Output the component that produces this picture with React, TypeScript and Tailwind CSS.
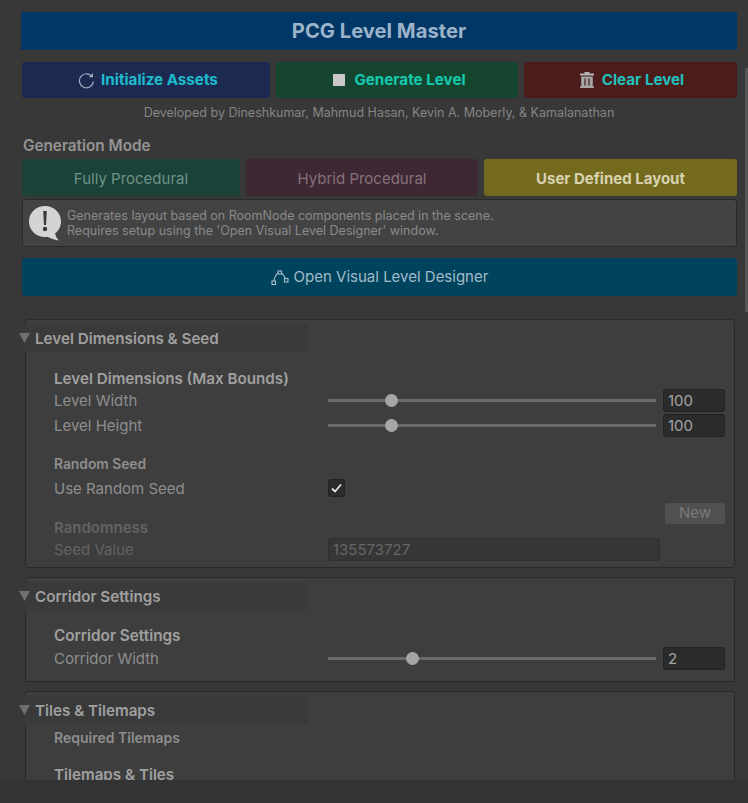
import React from "react";

const Slider = ({ pos }: { pos: number }) => (
  <div className="relative flex h-[13px] w-[328px] items-center">
    <div className="h-[3px] w-full bg-[#6a6a6a]" />
    <div
      className="absolute top-0 h-[13px] w-[13px] rounded-full bg-[#a6a6a6]"
      style={{ left: pos }}
    />
  </div>
);

const NumField = ({ value }: { value: string }) => (
  <div className="flex h-[23px] w-[62px] items-center rounded-[3px] border border-[#222222] bg-[#2b2b2b] pt-[1px] pl-1 text-[15px] text-[#a4a4a4]">
    {value}
  </div>
);

const SliderRow = ({ label, pos, value }: { label: string; pos: number; value: string }) => (
  <div className="flex h-[25px] items-center">
    <div className="w-[274px] pt-[2px] text-[15px] text-[#8e8e8e]">{label}</div>
    <Slider pos={pos} />
    <div className="ml-[7px]">
      <NumField value={value} />
    </div>
  </div>
);

const Panel = ({ title, className, children }: { title: string; className: string; children: React.ReactNode }) => (
  <section className={`relative mr-[13px] ml-[25px] rounded-[3px] border border-[#2a2a2a] bg-[#3e3e3e] ${className}`}>
    <div className="-ml-px mt-[4px] flex h-[28px] w-[283px] items-center bg-[#3a3a3a] pt-[2px] pl-[10px] text-[15.2px] font-semibold text-[#a0a0a0]">
      {title}
    </div>
    <svg className="absolute top-[13px] left-[-7px]" width="11" height="10" viewBox="0 0 11 10">
      <path d="M0 0H11L5.5 10Z" fill="#707070" />
    </svg>
    <div className="pl-[28px]">{children}</div>
  </section>
);

const TrashIcon = () => (
  <svg width="16" height="16" viewBox="0 0 16 16" className="mr-[7px]">
    <path d="M5.5 0H10.5V1.5H15V3.6H1V1.5H5.5Z" fill="#b5b5b5" />
    <path d="M2.2 4.4H13.8V14.6H15V16H1V14.6H2.2Z" fill="#a6a6a6" />
    <path d="M5 6.5H7V13.5H5ZM9 6.5H11V13.5H9Z" fill="#6a5553" />
  </svg>
);

const AlertBubble = () => (
  <svg width="34" height="36" viewBox="0 0 34 36" className="shrink-0">
    <path d="M17 1C26 1 33 7.6 33 16.5C33 22 30.5 26 27 28.5C27.5 31 29 33.5 31 35.5C27 35 22.5 33.5 19.5 31.8C18.6 32 17.8 32 17 32C8 32 1 25.4 1 16.5C1 7.6 8 1 17 1Z" fill="#d4d4d4" />
    <path d="M15.2 6H18.8L18 20H16Z" fill="#3a3a3a" />
    <circle cx="17" cy="24" r="2.2" fill="#3a3a3a" />
  </svg>
);

const DesignerIcon = () => (
  <svg width="18" height="16" viewBox="0 0 18 16" fill="none" stroke="#a9c0cc" strokeWidth="1.1" className="mr-[5px]">
    <rect x="1" y="11" width="3.5" height="3.5" />
    <rect x="7" y="1" width="3.5" height="3" />
    <rect x="13.5" y="8.5" width="3.5" height="3.5" />
    <path d="M2.7 11C3.5 7.5 5 4.5 7 2.8M10.5 2.8C12 4.5 13.5 6.5 14.5 8.5" />
  </svg>
);

export default function App() {
  return (
    <div className="relative flex h-[803px] w-[748px] flex-col overflow-hidden bg-[#383838] font-['Inter',sans-serif]">
      <main className="h-[780px] overflow-hidden pt-[12px]">
        <div className="mr-[11px] ml-[21px] flex h-[38px] items-center justify-center bg-[#003766] text-[20.2px] font-bold text-[#9db3c9]">
          PCG Level Master
        </div>

        <div className="mt-[12px] mr-[11px] ml-[22px] flex h-[36px] gap-[6px] text-[15.2px] font-bold">
          <div className="flex w-[248px] items-center justify-center rounded-[3px] bg-[#1c2a52] pl-[4px] text-[#1dbccd]">
            <svg width="17" height="17" viewBox="0 0 17 17" fill="none" stroke="#a4adbf" strokeWidth="1.2" className="mr-[6px]">
              <path d="M14.2 4.8A7 7 0 1 0 15.4 9.5" />
              <path d="M10.8 5.2H15V1Z" fill="#a4adbf" stroke="none" />
            </svg>
            Initialize Assets
          </div>
          <div className="flex w-[242px] items-center justify-center rounded-[3px] bg-[#15452f] pl-[5px] text-[#14c9ae]">
            <div className="mr-[9px] h-[12px] w-[12px] bg-[#c8c8c8]" />
            Generate Level
          </div>
          <div className="flex flex-1 items-center justify-center rounded-[3px] bg-[#4b1c1a] pl-[2px] text-[#1fc0bd]">
            <TrashIcon />
            Clear Level
          </div>
        </div>

        <div className="mt-[7px] mr-[11px] ml-[21px] text-center text-[12.5px] leading-[16px] text-[#858585]">
          Developed by Dineshkumar, Mahmud Hasan, Kevin A. Moberly, &amp; Kamalanathan
        </div>

        <div className="mt-[16px] ml-[23px] text-[15.3px] leading-[18px] font-semibold text-[#949494]">
          Generation Mode
        </div>

        <div className="mt-[4px] mr-[11px] ml-[22px] flex h-[37px] gap-[6px] text-[15px]">
          <div className="flex w-[218px] items-center justify-center rounded-[3px] bg-[#1a4238] pt-[3px] text-[#6f9288]">
            Fully Procedural
          </div>
          <div className="flex w-[232px] items-center justify-center rounded-[3px] bg-[#3e2833] pt-[3px] text-[#85717b]">
            Hybrid Procedural
          </div>
          <div className="flex flex-1 items-center justify-center rounded-[3px] bg-[#746a1e] pt-[3px] font-bold text-[#d8d2b0]">
            User Defined Layout
          </div>
        </div>

        <div className="mt-[3px] mr-[11px] ml-[22px] flex h-[48px] items-center rounded-[3px] border border-[#2a2a2a] bg-[#434343] pl-[5px] text-[12.5px] leading-[15.5px] text-[#8a8a8a]">
          <AlertBubble />
          <div className="ml-[5px]">
            Generates layout based on RoomNode components placed in the scene.
            <br />
            Requires setup using the 'Open Visual Level Designer' window.
          </div>
        </div>

        <div className="mt-[11px] mr-[11px] mb-[23px] ml-[22px] flex h-[38px] items-center justify-center rounded-[3px] bg-[#00435c] pt-[1px] text-[15px] text-[#a0bccb]">
          <DesignerIcon />
          Open Visual Level Designer
        </div>

        <Panel title="Level Dimensions & Seed" className="h-[249px]">
          <div className="mt-[18px] text-[15.2px] leading-[18px] font-semibold text-[#a0a0a0]">
            Level Dimensions (Max Bounds)
          </div>
          <div>
            <SliderRow label="Level Width" pos={57} value="100" />
            <SliderRow label="Level Height" pos={57} value="100" />
          </div>
          <div className="mt-[18px] text-[13.8px] leading-[16px] font-semibold text-[#8e8e8e]">Random Seed</div>
          <div className="mt-[6px] flex h-[20px] items-center">
            <div className="w-[274px] pt-[2px] text-[15px] text-[#8e8e8e]">Use Random Seed</div>
            <div className="flex h-[18px] w-[17px] items-center justify-center rounded-[3px] border border-[#222222] bg-[#2b2b2b]">
              <svg width="11" height="10" viewBox="0 0 11 10" fill="none" stroke="#e4e4e4" strokeWidth="1.8">
                <path d="M1 5.5L4 8.5L10 1.5" />
              </svg>
            </div>
          </div>
          <div className="ml-[611px] mt-[5px] flex h-[21px] w-[60px] items-center justify-center rounded-[2px] bg-[#505050] text-[15px] text-[#7a7a7a]">
            New
          </div>
          <div className="-mt-[5px] text-[15px] leading-[18px] font-semibold text-[#636363]">Randomness</div>
          <div className="mt-[1px] flex h-[23px] items-center">
            <div className="w-[274px] pt-[2px] text-[15px] text-[#636363]">Seed Value</div>
            <div className="flex h-[23px] w-[332px] items-center rounded-[3px] border border-[#2f2f2f] bg-[#363636] pt-[2px] pl-1 text-[15px] text-[#666666]">
              135573727
            </div>
          </div>
        </Panel>

        <Panel title="Corridor Settings" className="mt-[9px] h-[105px]">
          <div className="mt-[17px] text-[15.3px] leading-[18px] font-semibold text-[#a0a0a0]">Corridor Settings</div>
          <div className="mt-[1px]">
            <SliderRow label="Corridor Width" pos={78} value="2" />
          </div>
        </Panel>

        <Panel title="Tiles & Tilemaps" className="mt-[9px] h-[110px]">
          <div className="mt-[6px] text-[14px] leading-[16px] font-semibold text-[#8e8e8e]">Required Tilemaps</div>
          <div className="mt-[20px] text-[15.2px] leading-[18px] font-semibold text-[#a0a0a0]">Tilemaps &amp; Tiles</div>
        </Panel>
      </main>
      <div className="h-[23px] bg-[#333333]" />
      <div className="absolute top-[68px] right-0 h-[244px] w-[3px] rounded-l-[2px] bg-[#585858]" />
    </div>
  );
}
